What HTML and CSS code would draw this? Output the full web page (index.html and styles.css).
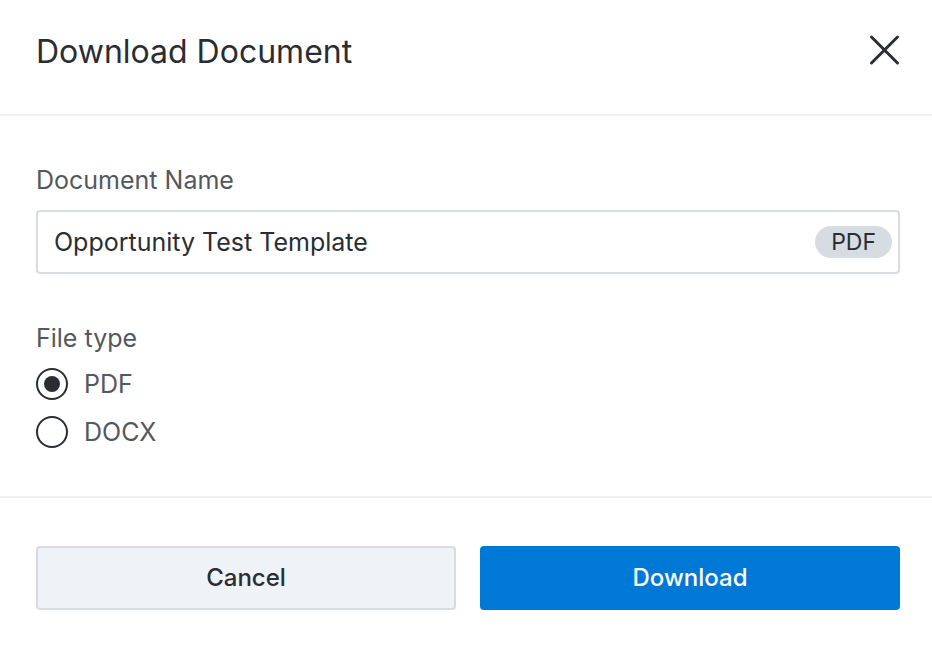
FILE: index.html
```html
<!DOCTYPE html>
<html lang="en">
<head>
    <meta charset="UTF-8">
    <meta name="viewport" content="width=device-width, initial-scale=1.0">
    <title>Download Document</title>
    <link rel="stylesheet" href="styles.css">
</head>

<body>
    <form class="modal" role="dialog" aria-labelledby="modal-title">
        <header class="modal-header">
            <h1 id="modal-title">Download Document</h1>
            <button type="button" class="close-button" aria-label="Close">
                <svg width="32" height="32" viewBox="0 0 32 32" fill="none" stroke="currentColor" stroke-width="3" stroke-linecap="round">
                    <path d="M3.5 3L29.5 29M29.5 3L3.5 29"/>
                </svg>
            </button>
        </header>

        <div class="modal-body">
            <label class="field-label" for="document-name">Document Name</label>
            <div class="name-field">
                <input type="text" id="document-name" value="Opportunity Test Template">
                <span class="badge">PDF</span>
            </div>

            <fieldset class="file-type">
                <legend class="field-label">File type</legend>
                <div class="radio-list">
                    <label class="radio-option"><input type="radio" name="file-type" value="pdf" checked>PDF</label>
                    <label class="radio-option"><input type="radio" name="file-type" value="docx">DOCX</label>
                </div>
            </fieldset>
        </div>

        <footer class="modal-footer">
            <button type="button" class="button cancel">Cancel</button>
            <button type="submit" class="button download">Download</button>
        </footer>
    </form>
</body>
</html>
```

FILE: styles.css
```css
* {
    box-sizing: border-box;
}

body {
    margin: 0;
    background-color: #fff;
    font-family: Inter, sans-serif;
    font-size: 25px;
    line-height: 32px;
    color: #2a2d34;
}

button,
input {
    font: inherit;
    color: inherit;
}

.modal-header {
    display: flex;
    align-items: center;
    justify-content: space-between;
    padding: 32px 32px 42px 36px;
    border-bottom: 2px solid #f0f1f3;
}

h1 {
    margin: 0;
    font-size: 32px;
    font-weight: 400;
    line-height: 40px;
}

.close-button {
    display: flex;
    margin-top: -4px;
    padding: 0;
    border: none;
    background: none;
    cursor: pointer;
}

.modal-body {
    padding: 48px 32px 48px 36px;
    border-bottom: 2px solid #f0f1f3;
}

.field-label {
    display: block;
    padding: 0;
    color: #54575d;
}

/* Text box with the file extension shown at its right end */
.name-field {
    display: flex;
    align-items: center;
    margin-top: 14px;
    padding-right: 6px;
    height: 64px;
    border: 2px solid #d9dbe2;
    border-radius: 4px;
}

.name-field input {
    flex: 1;
    min-width: 0;
    height: 100%;
    padding: 0 16px;
    border: none;
    outline: none;
    background: none;
}

.badge {
    padding: 0 16px;
    border-radius: 16px;
    background-color: #d7dce3;
    font-size: 23px;
}

.file-type {
    margin: 48px 0 0;
    padding: 0;
    border: none;
}

.radio-list {
    display: grid;
    gap: 16px;
    margin-top: 14px;
}

.radio-option {
    display: flex;
    align-items: center;
    gap: 16px;
    color: #54575d;
}

.radio-option input {
    display: grid;
    place-items: center;
    appearance: none;
    width: 32px;
    height: 32px;
    margin: 0;
    border: 2px solid #2a2d34;
    border-radius: 50%;
}

.radio-option input:checked::before {
    content: "";
    width: 16px;
    height: 16px;
    border-radius: 50%;
    background-color: #2a2d34;
}

/* Footer buttons */
.modal-footer {
    display: flex;
    gap: 24px;
    padding: 48px 32px 38px 36px;
}

.button {
    flex: 1;
    height: 64px;
    border: 2px solid #d9dbe2;
    border-radius: 4px;
    background-color: #eff2f7;
    font-size: 24px;
    font-weight: 500;
    cursor: pointer;
}

.download {
    border-color: #0078d6;
    background-color: #0078d6;
    color: #fff;
}
```
